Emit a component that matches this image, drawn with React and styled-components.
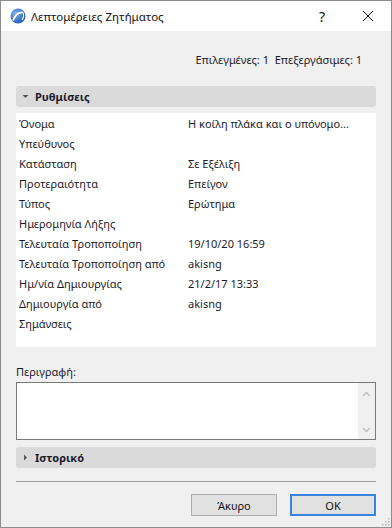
import React from "react";
import styled, { createGlobalStyle } from "styled-components";

const GlobalStyle = createGlobalStyle`
  html, body {
    margin: 0;
    padding: 0;
    background: #ffffff;
  }
  body {
    font-family: "Noto Sans", "Liberation Sans", sans-serif;
    font-size: 11px;
    color: #1a1a2a;
  }
`;

const fields = [
  ["Όνομα", "Η κοίλη πλάκα και ο υπόνομο..."],
  ["Υπεύθυνος", ""],
  ["Κατάσταση", "Σε Εξέλιξη"],
  ["Προτεραιότητα", "Επείγον"],
  ["Τύπος", "Ερώτημα"],
  ["Ημερομηνία Λήξης", ""],
  ["Τελευταία Τροποποίηση", "19/10/20 16:59"],
  ["Τελευταία Τροποποίηση από", "akisng"],
  ["Ημ/νία Δημιουργίας", "21/2/17 13:33"],
  ["Δημιουργία από", "akisng"],
  ["Σημάνσεις", ""],
];

function AppLogo() {
  return (
    <svg width="16" height="16" viewBox="0 0 16 16">
      <defs>
        <radialGradient id="lg" cx="35%" cy="35%" r="70%">
          <stop offset="0%" stopColor="#7fb2ee" />
          <stop offset="100%" stopColor="#1d5bb5" />
        </radialGradient>
      </defs>
      <circle cx="8" cy="8" r="7.5" fill="url(#lg)" />
      <path d="M3 12.5 C5 7 9 3.5 13 4.5" stroke="#fff" strokeWidth="1.8" fill="none" />
      <path d="M13 4.5 C14 7 13.5 10 12 12" stroke="#fff" strokeWidth="1.2" fill="none" />
    </svg>
  );
}

function Caret({ open }) {
  return (
    <svg width="7" height="7" viewBox="0 0 7 7">
      {open ? <polygon points="0.5,2 6.5,2 3.5,5" fill="#555" /> : <polygon points="2,0.5 5,3.5 2,6.5" fill="#555" />}
    </svg>
  );
}

export default function App() {
  return (
    <>
      <GlobalStyle />
      <Window>
        <TitleBar>
          <AppLogo />
          <Title>Λεπτομέρειες Ζητήματος</Title>
          <TitleButton>?</TitleButton>
          <TitleButton>
            <svg width="12" height="12" viewBox="0 0 12 12">
              <path d="M1 1 L11 11 M11 1 L1 11" stroke="#111" strokeWidth="1" />
            </svg>
          </TitleButton>
        </TitleBar>
        <Body>
          <Counts>
            Επιλεγμένες: 1&nbsp;&nbsp;Επεξεργάσιμες: 1
          </Counts>
          <SectionHeader>
            <Caret open />
            <span>Ρυθμίσεις</span>
          </SectionHeader>
          <Panel>
            {fields.map(([label, value]) => (
              <Row key={label}>
                <Label>{label}</Label>
                <Value>{value}</Value>
              </Row>
            ))}
          </Panel>
          <FieldLabel>Περιγραφή:</FieldLabel>
          <TextBox>
            <ScrollBar>
              <svg width="9" height="6" viewBox="0 0 9 6">
                <path d="M1 5 L4.5 1.5 L8 5" stroke="#bdbdbd" strokeWidth="1.3" fill="none" />
              </svg>
              <svg width="9" height="6" viewBox="0 0 9 6">
                <path d="M1 1 L4.5 4.5 L8 1" stroke="#bdbdbd" strokeWidth="1.3" fill="none" />
              </svg>
            </ScrollBar>
          </TextBox>
          <SectionHeader $collapsed>
            <Caret />
            <span>Ιστορικό</span>
          </SectionHeader>
          <Divider />
          <Buttons>
            <Button>Άκυρο</Button>
            <Button $primary>OK</Button>
          </Buttons>
        </Body>
        <Grip>
          <svg width="9" height="9" viewBox="0 0 9 9">
            {[[7, 1], [7, 4], [4, 4], [7, 7], [4, 7], [1, 7]].map(([x, y]) => (
              <rect key={`${x}-${y}`} x={x} y={y} width="1.5" height="1.5" fill="#b5b5b5" />
            ))}
          </svg>
        </Grip>
      </Window>
    </>
  );
}

const Window = styled.div`
  position: relative;
  width: 392px;
  height: 528px;
  box-sizing: border-box;
  border: 1px solid #8c8c8c;
  background: #f0f0f0;
  display: flex;
  flex-direction: column;
`;

const TitleBar = styled.div`
  height: 30px;
  background: #ffffff;
  display: flex;
  align-items: center;
  padding-left: 9px;
`;

const Title = styled.div`
  flex: 1;
  margin-left: 5px;
  font-size: 11.5px;
  color: #111;
`;

const TitleButton = styled.div`
  width: 46px;
  height: 30px;
  display: flex;
  align-items: center;
  justify-content: center;
  font-size: 14px;
  color: #111;
`;

const Body = styled.div`
  padding: 0 15px;
  display: flex;
  flex-direction: column;
`;

const Counts = styled.div`
  height: 55px;
  display: flex;
  align-items: center;
  justify-content: flex-end;
  padding-right: 14px;
  padding-top: 2px;
  box-sizing: border-box;
`;

const SectionHeader = styled.div`
  height: 21px;
  background: #dadada;
  border-radius: 3px;
  display: flex;
  align-items: center;
  gap: 6px;
  padding-left: 6px;
  font-weight: bold;
  margin-top: ${(p) => (p.$collapsed ? "7px" : "0")};
`;

const Panel = styled.div`
  margin-top: 6px;
  height: 234px;
  box-sizing: border-box;
  background: #ffffff;
`;

const Row = styled.div`
  height: 20px;
  display: flex;
  align-items: center;
  padding-left: 3px;
`;

const Label = styled.div`
  width: 169px;
`;

const Value = styled.div`
  flex: 1;
`;

const FieldLabel = styled.div`
  margin-top: 15px;
  height: 20px;
  line-height: 20px;
`;

const TextBox = styled.div`
  height: 58px;
  box-sizing: border-box;
  border: 1px solid #7a7a7a;
  background: #ffffff;
  display: flex;
  justify-content: flex-end;
`;

const ScrollBar = styled.div`
  width: 17px;
  background: #f0f0f0;
  display: flex;
  flex-direction: column;
  justify-content: space-between;
  align-items: center;
  padding: 8px 0 6px;
`;

const Divider = styled.div`
  margin-top: 13px;
  height: 1px;
  background: #a0a0a0;
`;

const Buttons = styled.div`
  margin-top: 12px;
  display: flex;
  justify-content: flex-end;
  gap: 13px;
`;

const Button = styled.div`
  width: 86px;
  height: 22px;
  box-sizing: border-box;
  background: #e1e1e1;
  border: ${(p) => (p.$primary ? "2px solid #3a83e0" : "1px solid #adadad")};
  display: flex;
  align-items: center;
  justify-content: center;
  color: #111;
`;

const Grip = styled.div`
  position: absolute;
  right: 1px;
  bottom: 1px;
  line-height: 0;
`;
